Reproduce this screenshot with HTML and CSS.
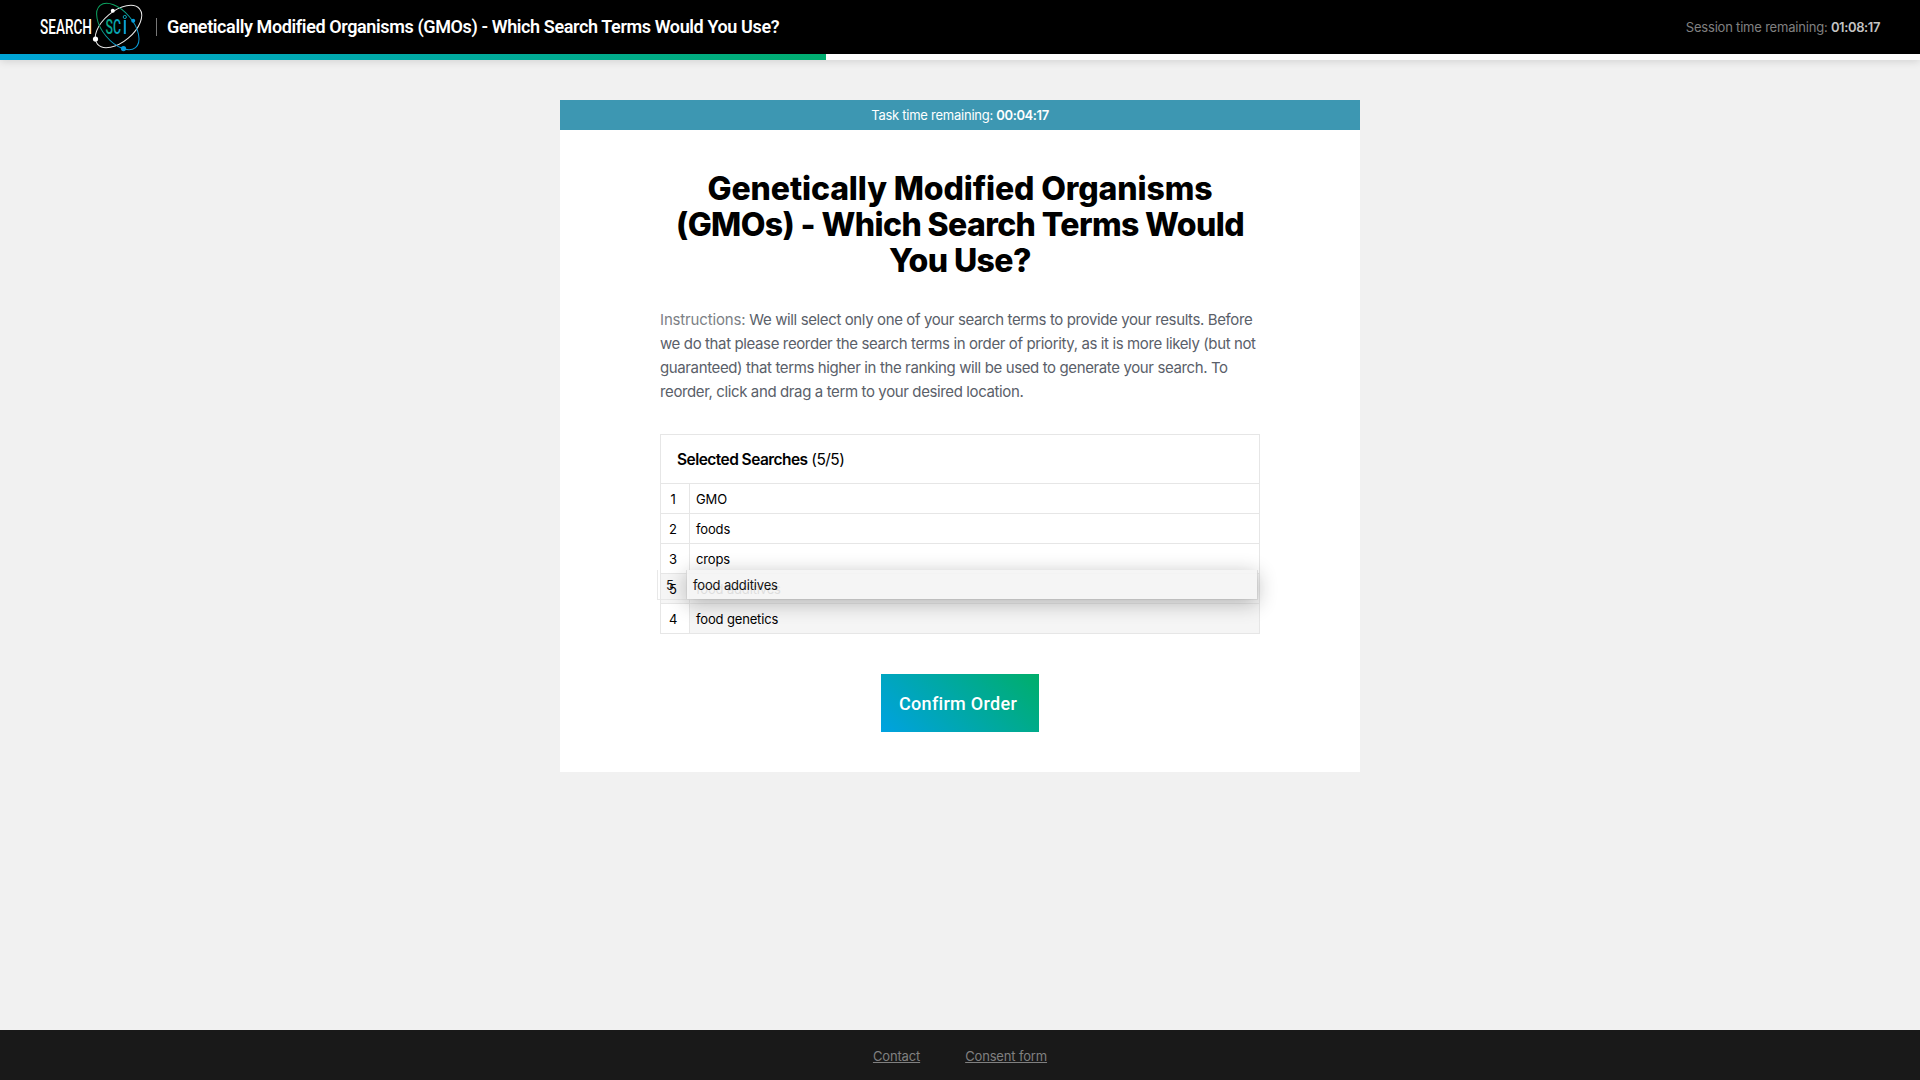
FILE: index.html
```html
<!DOCTYPE html>
<html lang="en">
<head>
<meta charset="utf-8">
<title>SearchSci</title>
<link rel="stylesheet" href="styles.css">
</head>
<body>
<header class="topbar">
  <svg class="logo" width="104" height="54" viewBox="40 0 104 54">
    <defs>
      <linearGradient id="ring" x1="0" y1="0" x2="1" y2="0"><stop offset=".2" stop-color="#0ba360"/><stop offset=".75" stop-color="#0a9bd8"/></linearGradient>
      <linearGradient id="sci" x1="0" y1="0" x2="1" y2="0"><stop offset="0" stop-color="#08a878"/><stop offset="1" stop-color="#0aa3d2"/></linearGradient>
    </defs>
    <text class="logo-text" x="40" y="34" textLength="52" lengthAdjust="spacingAndGlyphs" fill="#fff">SEARCH</text>
    <text class="logo-text" x="105.5" y="34" textLength="15.5" lengthAdjust="spacingAndGlyphs" fill="url(#sci)">SC</text>
    <path d="M124.8 20v14" stroke="#0aa3d2" stroke-width="2"/>
    <circle cx="124.8" cy="17" r="1.6" fill="none" stroke="#0aa3b8"/>
    <ellipse cx="118.5" cy="26.5" rx="27.5" ry="15.2" transform="rotate(-40 118.5 26.5)" fill="none" stroke="#e8e8e8"/>
    <ellipse cx="117.8" cy="26.5" rx="27.5" ry="15.2" transform="rotate(50 117.8 26.5)" fill="none" stroke="url(#ring)"/>
    <circle cx="112.8" cy="10.7" r="2" fill="#fff"/><circle cx="95.5" cy="39" r="2.6" fill="#fff"/>
    <circle cx="133.2" cy="20.7" r="2" fill="#079fe0"/><circle cx="123.5" cy="48.6" r="2.6" fill="#079fe0"/>
  </svg>
  <span class="divider"></span>
  <span class="title">Genetically Modified Organisms (GMOs) - Which Search Terms Would You Use?</span>
  <span class="session">Session time remaining: <b>01:08:17</b></span>
</header>
<div class="progress"><div class="bar"></div></div>
<main class="card">
  <div class="task">Task time remaining: <b>00:04:17</b></div>
  <section class="content">
    <h1>Genetically Modified Organisms<br><span class="tight">(GMOs) - Which Search Terms Would</span><br><span class="tight">You Use?</span></h1>
    <p class="instructions"><span class="lead">Instructions:</span> We will select only one of your search terms to provide your results. Before<br>we do that please reorder the search terms in order of priority, as it is more likely (but not<br>guaranteed) that terms higher in the ranking will be used to generate your search. To<br>reorder, click and drag a term to your desired location.</p>
    <div class="list">
      <div class="list-head"><b>Selected Searches</b> (5/5)</div>
      <div class="row"><span class="num">1</span><span class="term">GMO</span></div>
      <div class="row"><span class="num">2</span><span class="term">foods</span></div>
      <div class="row"><span class="num">3</span><span class="term">crops</span></div>
      <div class="row origin"><span class="num">5</span><span class="term">food additives</span></div>
      <div class="row alt"><span class="num">4</span><span class="term">food genetics</span></div>
      <div class="row dragged"><span class="num">5</span><span class="term">food additives</span></div>
    </div>
    <button class="confirm">Confirm Order</button>
  </section>
</main>
<footer class="footer"><a>Contact</a><a>Consent form</a></footer>
</body>
</html>
```
FILE: styles.css
```css
* { box-sizing: border-box; }
body {
  margin: 0;
  height: 1080px;
  display: flex;
  flex-direction: column;
  align-items: center;
  background: #f1f1f1;
  color: #000;
  font-family: Inter, sans-serif;
  font-size: 13px;
  letter-spacing: -.15px;
}
b { font-weight: 600; }
.topbar {
  width: 100%;
  height: 54px;
  padding: 0 40px;
  display: flex;
  align-items: center;
  background: #000;
  color: #fff;
}
.logo { flex: none; }
.logo-text { font: 500 21px Roboto, sans-serif; letter-spacing: 0; }
.divider { width: 1px; height: 18px; margin: 0 10px 0 12px; background: #777; }
.title { font: 600 18px/54px Roboto, sans-serif; letter-spacing: -.385px; }
.session { margin-left: auto; color: #808080; line-height: 55px; letter-spacing: -.2px; }
.session b { color: #c4c4c4; letter-spacing: -.4px; }
.progress {
  width: 100%;
  height: 6px;
  background: #fff;
  box-shadow: 0 0 10px rgba(0, 0, 0, .2);
}
.bar { width: 826px; height: 6px; background: linear-gradient(90deg, #00a5d8, #00ae70); }
.card { width: 800px; height: 672px; margin-top: 40px; background: #fff; }
.task { height: 30px; line-height: 31px; text-align: center; background: #3d97b2; color: #fff; letter-spacing: -.25px; }
.task b { letter-spacing: -.4px; }
.content { padding: 41px 100px 40px; display: flex; flex-direction: column; }
h1 { margin: 0; font-size: 32px; line-height: 36px; font-weight: 850; text-align: center; white-space: nowrap; letter-spacing: -.12px; }
.tight { letter-spacing: -.6px; }
.instructions { margin: 29px 0 0; font-size: 15px; line-height: 24px; color: #5a6069; white-space: nowrap; letter-spacing: -.38px; }
.lead { color: #7c7f85; letter-spacing: -.15px; }
.list { position: relative; height: 200px; margin-top: 30px; border: 1px solid #e6e6e6; }
.list-head { height: 49px; padding-left: 16px; font-size: 15.5px; line-height: 49px; border-bottom: 1px solid #e6e6e6; letter-spacing: -.55px; }
.row { display: flex; height: 30px; line-height: 31px; border-bottom: 1px solid #e6e6e6; }
.num { width: 29px; padding-right: 4px; text-align: center; border-right: 1px solid #e6e6e6; }
.term { flex: 1; padding-left: 6px; }
.origin, .alt .term { background: #f5f5f5; }
.alt { height: 29px; border-bottom: 0; }
/* row being moved, floating over its slot */
.dragged {
  position: absolute;
  left: -4px;
  top: 135px;
  width: 601px;
  border: 1px solid #e6e6e6;
  border-top: 0;
  opacity: .9;
}
.dragged .term { background: #f5f5f5; box-shadow: 0 4px 20px rgba(0, 0, 0, .3); }
.confirm {
  align-self: center;
  width: 158px;
  height: 58px;
  margin-top: 40px;
  padding: 0 0 0 18px;
  border: 0;
  background: linear-gradient(45deg, #00a2e1, #00ae6a);
  color: #fff;
  text-align: left;
  font: 500 18px Roboto, sans-serif;
  letter-spacing: .3px;
}
.footer {
  width: 100%;
  height: 50px;
  margin-top: auto;
  padding: 2px 0 0;
  display: flex;
  justify-content: center;
  align-items: center;
  gap: 45px;
  background: #191919;
  color: #808080;
  text-decoration: underline;
}
```
